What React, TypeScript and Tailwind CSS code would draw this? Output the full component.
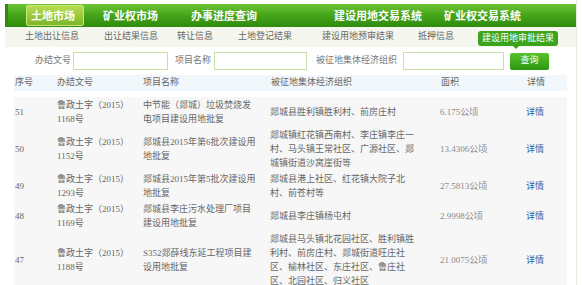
const navItems = [
  { label: "土地市场", ml: "ml-[18px]", active: true },
  { label: "矿业权市场", ml: "ml-[19px]" },
  { label: "办事进度查询", ml: "ml-[33px]" },
  { label: "建设用地交易系统", ml: "ml-[77px]" },
  { label: "矿业权交易系统", ml: "ml-[22px]" },
];

const subItems = [
  { label: "土地出让信息", ml: "ml-[20px]" },
  { label: "出让结果信息", ml: "ml-[25px]" },
  { label: "转让信息", ml: "ml-[19px]" },
  { label: "土地登记结果", ml: "ml-[25px]" },
  { label: "建设用地预审结果", ml: "ml-[30px]" },
  { label: "抵押信息", ml: "ml-[24px]" },
];

type Row = {
  no: string;
  doc: string[];
  name: string[];
  org: string[];
  area: string;
};

const rows: Row[] = [
  {
    no: "51",
    doc: ["鲁政土字（2015）", "1168号"],
    name: ["中节能（郯城）垃圾焚烧发", "电项目建设用地批复"],
    org: ["郯城县胜利镇胜利村、前房庄村"],
    area: "6.175公顷",
  },
  {
    no: "50",
    doc: ["鲁政土字（2015）", "1152号"],
    name: ["郯城县2015年第6批次建设用", "地批复"],
    org: ["郯城镇红花镇西南村、李庄镇李庄一", "村、马头镇王常社区、广源社区、郯", "城镇街道沙窝崖街等"],
    area: "13.4306公顷",
  },
  {
    no: "49",
    doc: ["鲁政土字（2015）", "1293号"],
    name: ["郯城县2015年第5批次建设用", "地批复"],
    org: ["郯城县港上社区、红花镇大院子北", "村、前苍村等"],
    area: "27.5813公顷",
  },
  {
    no: "48",
    doc: ["鲁政土字（2015）", "1169号"],
    name: ["郯城县李庄污水处理厂项目", "建设用地批复"],
    org: ["郯城县李庄镇杨屯村"],
    area: "2.9998公顷",
  },
  {
    no: "47",
    doc: ["鲁政土字（2015）", "1188号"],
    name: ["S352郯薛线东延工程项目建", "设用地批复"],
    org: ["郯城县马头镇北花园社区、胜利镇胜", "利村、前房庄村、郯城街道旺庄社", "区、榆林社区、东庄社区、鲁庄社", "区、北园社区、归义社区"],
    area: "21.0075公顷",
  },
];

const cols = "grid grid-cols-[43px_86px_127px_170px_86px_41px]";

const Lines = ({ lines }: { lines: string[] }) => (
  <div className="whitespace-nowrap">
    {lines.map((l, i) => (
      <div key={i}>{l}</div>
    ))}
  </div>
);

const App = () => {
  return (
    <div
      className="w-[582px] h-[285px] overflow-hidden bg-white"
      style={{ fontFamily: '"Liberation Serif", "Noto Sans CJK SC", serif' }}
    >
      <div className="ml-[5px] w-[572px] h-full border-r border-[#e6eddc] pt-[4px]">
        {/* top nav */}
        <div className="h-[23px] flex items-stretch bg-gradient-to-b from-[#6cc434] via-[#45a41a] to-[#2f8b0d] border-l-[3px] border-[#3a8510]">
          {navItems.map((n) =>
            n.active ? (
              <div
                key={n.label}
                className={`${n.ml} w-[58px] my-px pl-[4px] flex items-center rounded-[2px] border border-[#c8e77a] bg-gradient-to-b from-[#b9de52] to-[#7db528] text-white text-[11px] font-bold`}
                style={{ fontFamily: '"Noto Sans CJK SC", sans-serif' }}
              >
                {n.label}
              </div>
            ) : (
              <div
                key={n.label}
                className={`${n.ml} flex items-center text-white text-[11px] font-bold`}
                style={{ fontFamily: '"Noto Sans CJK SC", sans-serif' }}
              >
                {n.label}
              </div>
            )
          )}
        </div>

        {/* sub nav */}
        <div className="h-[20px] flex items-center bg-[#f5f7ee] text-[9px] text-[#666]">
          {subItems.map((s) => (
            <div key={s.label} className={s.ml}>
              {s.label}
            </div>
          ))}
          <div className="relative ml-[24px] self-end mb-px h-[15px] px-[4px] flex items-center rounded-[3px] bg-[#3aa51c] text-white">
            建设用地审批结果
            <span className="absolute left-[35px] -bottom-[3px] w-0 h-0 border-l-[3px] border-r-[3px] border-t-[3px] border-l-transparent border-r-transparent border-t-[#3aa51c]" />
          </div>
        </div>

        {/* search */}
        <div className="mt-[5px] h-[18px] flex items-center text-[9px] text-[#777]">
          <span className="ml-[30px]">办结文号</span>
          <div className="ml-[2px] w-[95px] h-[18px] border border-[#c6e0a8] bg-white" />
          <span className="ml-[7px]">项目名称</span>
          <div className="ml-[3px] w-[93px] h-[18px] border border-[#c6e0a8] bg-white" />
          <span className="ml-[9px]">被征地集体经济组织</span>
          <div className="ml-[6px] w-[101px] h-[18px] border border-[#c6e0a8] bg-white" />
          <div className="ml-[6px] w-[39px] h-[17px] flex items-center justify-center rounded-[2px] bg-gradient-to-b from-[#58c22c] to-[#2c9710] text-white">
            查询
          </div>
        </div>

        {/* table */}
        <div className="ml-[9px] w-[553px] mt-[5px] text-[9px]">
          <div className={`${cols} h-[16px] items-center bg-[#f1f7fb] text-[#666]`}>
            <div className="pl-px">序号</div>
            <div>办结文号</div>
            <div>项目名称</div>
            <div className="pl-px">被征地集体经济组织</div>
            <div className="pl-px">面积</div>
            <div className="pl-px">详情</div>
          </div>
          <div className="mt-[6px] bg-[#f7f7f7] text-[#666] leading-[14px]">
            {rows.map((r) => (
              <div key={r.no} className={`${cols} items-center py-px`}>
                <div className="pl-px">{r.no}</div>
                <Lines lines={r.doc} />
                <Lines lines={r.name} />
                <Lines lines={r.org} />
                <div className="text-[#888]">{r.area}</div>
                <div className="text-[#2d64aa]">详情</div>
              </div>
            ))}
          </div>
        </div>
      </div>
    </div>
  );
};

export default App;
